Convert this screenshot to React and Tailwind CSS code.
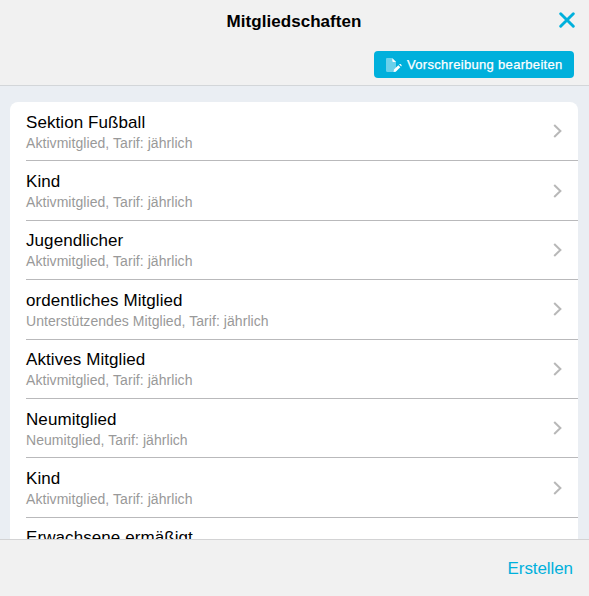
import React from "react";

const memberships = [
    { name: "Sektion Fußball", info: "Aktivmitglied, Tarif: jährlich" },
    { name: "Kind", info: "Aktivmitglied, Tarif: jährlich" },
    { name: "Jugendlicher", info: "Aktivmitglied, Tarif: jährlich" },
    { name: "ordentliches Mitglied", info: "Unterstützendes Mitglied, Tarif: jährlich" },
    { name: "Aktives Mitglied", info: "Aktivmitglied, Tarif: jährlich" },
    { name: "Neumitglied", info: "Neumitglied, Tarif: jährlich" },
    { name: "Kind", info: "Aktivmitglied, Tarif: jährlich" },
    { name: "Erwachsene ermäßigt", info: "Aktivmitglied, Tarif: jährlich" },
];

function CloseIcon() {
    return (
        <svg width="16" height="16" viewBox="0 0 16 16" fill="none" stroke="#00b0dc" strokeWidth="2.9" strokeLinecap="round">
            <path d="M1.7 1.7 14.3 14.3M14.3 1.7 1.7 14.3" />
        </svg>
    );
}

// Document with a pencil in the lower right corner
function EditFileIcon() {
    return (
        <svg width="16" height="14" viewBox="0 0 16 14">
            <path d="M1.2 0H6v3.2c0 .5.3.8.8.8H10v3.6L7.4 10.2 6.7 14H1.2C.5 14 0 13.5 0 12.8V1.2C0 .5.5 0 1.2 0Z" fill="#fff" fillOpacity=".42" />
            <path d="M10 7.6 7.4 10.2 6.7 14H10Z" fill="#fff" fillOpacity=".42" />
            <path d="M6.2 0 10.2 4H7c-.5 0-.8-.3-.8-.8Z" fill="#fff" />
            <path d="m12.3 7.3 2 2L10 13.5l-2.4.4.4-2.4Z" fill="#fff" />
            <path d="m13.2 6.4.3-.3c.3-.3.8-.3 1.1 0l.9.9c.3.3.3.8 0 1.1l-.3.3Z" fill="#fff" />
        </svg>
    );
}

function MembershipRow({ name, info }) {
    return (
        <li className="pl-4">
            <button className="flex w-full h-[59.4px] items-center justify-between border-b border-[#b9b9bb] pr-4 text-left">
                <div className="pt-[3px]">
                    <div className="text-[17px] leading-[20px] tracking-[0.08px] text-black">{name}</div>
                    <div className="text-[14px] leading-[20px] tracking-[0.06px] text-[#999]">{info}</div>
                </div>
                <svg width="9" height="14" viewBox="0 0 9 14" fill="none" stroke="#b8b8b8" strokeWidth="2">
                    <path d="M1.2 1 7.4 7 1.2 13" />
                </svg>
            </button>
        </li>
    );
}

function App() {
    return (
        <div className="flex h-screen flex-col overflow-hidden bg-[#eaeef3] font-['Liberation_Sans',Arial,sans-serif]">
            <header className="h-[86px] shrink-0 border-b border-[#d3d6d9] bg-[#f1f1f1]">
                <div className="grid h-[42px] grid-cols-[1fr_auto_1fr] items-center pr-[14px]">
                    <span />
                    <h1 className="pt-0.5 pl-[13px] text-[17px] font-bold tracking-[0.04px] text-black">Mitgliedschaften</h1>
                    <button className="mb-0.5 justify-self-end" aria-label="Schließen">
                        <CloseIcon />
                    </button>
                </div>
                <div className="flex justify-end pt-[9px] pr-[15px]">
                    <button className="flex h-[27px] w-[200px] items-center gap-[5px] rounded bg-[#00b0dc] pl-3 text-[13px] tracking-[0.31px] whitespace-nowrap text-white [-webkit-text-stroke:0.25px_white]">
                        <EditFileIcon />
                        Vorschreibung bearbeiten
                    </button>
                </div>
            </header>

            <main className="min-h-0 flex-1 overflow-hidden pt-4 pr-[11px] pl-[10px]">
                <ul className="rounded-lg bg-white">
                    {memberships.map((membership, index) => (
                        <MembershipRow key={index} name={membership.name} info={membership.info} />
                    ))}
                </ul>
            </main>

            <footer className="flex h-[57px] shrink-0 items-center justify-end border-t border-[#d3d3d4] bg-[#f1f1f1] pr-4">
                <button className="pt-0.5 text-[17px] tracking-[-0.08px] text-[#00b0dc]">Erstellen</button>
            </footer>
        </div>
    );
}

export default App;
